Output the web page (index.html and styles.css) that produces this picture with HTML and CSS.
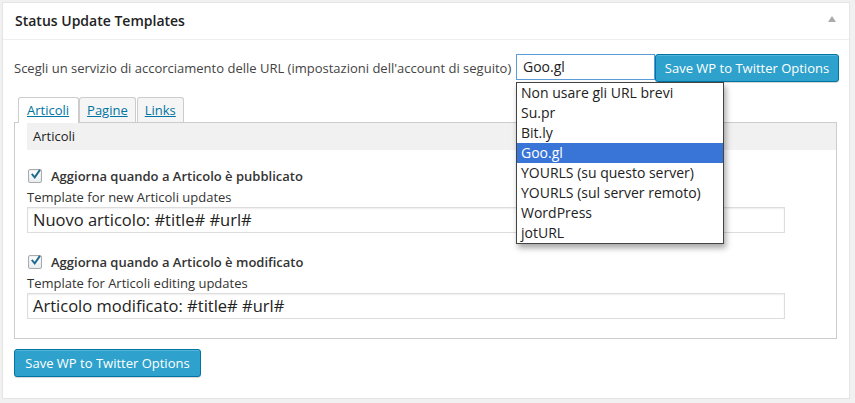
FILE: index.html
```html
<!DOCTYPE html>
<html>
<head>
<meta charset="utf-8">
<link rel="stylesheet" href="styles.css">
</head>
<body>
<div class="postbox">
  <div class="hndle">
    <h3 class="title">Status Update Templates</h3>
    <span class="toggle"></span>
  </div>
  <div class="inside">
    <div class="shortener-row">
      <span class="shortener-label">Scegli un servizio di accorciamento delle URL (impostazioni dell'account di seguito)</span>
      <div class="select-wrap">
        <div class="select">Goo.gl</div>
        <ul class="dropdown">
          <li>Non usare gli URL brevi</li>
          <li>Su.pr</li>
          <li>Bit.ly</li>
          <li class="selected">Goo.gl</li>
          <li>YOURLS (su questo server)</li>
          <li>YOURLS (sul server remoto)</li>
          <li>WordPress</li>
          <li>jotURL</li>
        </ul>
      </div>
      <button class="button-primary top-btn">Save WP to Twitter Options</button>
    </div>
    <div class="tabs">
      <a class="tab active">Articoli</a>
      <a class="tab">Pagine</a>
      <a class="tab">Links</a>
    </div>
    <div class="tab-panel">
      <div class="panel-heading">Articoli</div>
      <div class="fields">
        <div class="check-row">
          <span class="checkbox"><svg viewBox="0 0 14 14" width="14" height="14"><path d="M3 6.5 L6 10 L12 1.5" fill="none" stroke="#1e6a8e" stroke-width="2.4" stroke-linecap="square"/></svg></span>
          <span class="check-label">Aggiorna quando a Articolo è pubblicato</span>
        </div>
        <div class="field-label">Template for new Articoli updates</div>
        <div class="text-input">Nuovo articolo: #title# #url#</div>
        <div class="check-row second">
          <span class="checkbox"><svg viewBox="0 0 14 14" width="14" height="14"><path d="M3 6.5 L6 10 L12 1.5" fill="none" stroke="#1e6a8e" stroke-width="2.4" stroke-linecap="square"/></svg></span>
          <span class="check-label">Aggiorna quando a Articolo è modificato</span>
        </div>
        <div class="field-label">Template for Articoli editing updates</div>
        <div class="text-input">Articolo modificato: #title# #url#</div>
      </div>
    </div>
    <button class="button-primary bottom-btn">Save WP to Twitter Options</button>
  </div>
</div>
</body>
</html>
```

FILE: styles.css
```css
html, body {
  margin: 0;
  padding: 0;
  background: #f1f1f1;
}
body {
  padding: 2px 0 0 2px;
  font-family: "Open Sans", "Noto Sans", sans-serif;
  font-size: 13px;
  color: #444;
}
.postbox {
  width: 846px;
  height: 395px;
  background: #fff;
  border: 1px solid #e5e5e5;
  box-shadow: 0 1px 1px rgba(0,0,0,0.04);
}
.hndle {
  height: 36px;
  border-bottom: 1px solid #eee;
  display: flex;
  align-items: center;
  justify-content: space-between;
  padding: 0 13px 0 12px;
}
.title {
  margin: 0;
  font-size: 14px;
  font-weight: 600;
  color: #222;
  position: relative;
  top: -1px;
}
.toggle {
  width: 0;
  height: 0;
  border-left: 4px solid transparent;
  border-right: 4px solid transparent;
  border-bottom: 6px solid #aaa;
  position: relative;
  top: -2px;
}
.inside {
  padding: 14px 13px 0 11px;
}
.shortener-row {
  display: flex;
  align-items: flex-start;
  height: 28px;
}
.shortener-row > * {
  flex-shrink: 0;
  white-space: nowrap;
}
.shortener-label {
  line-height: 28px;
  width: 502px;
}
.select-wrap {
  position: relative;
}
.select {
  box-sizing: border-box;
  width: 139px;
  height: 26px;
  border: 1px dotted #333;
  outline: 1px solid #5b9dd9;
  outline-offset: -1px;
  font-size: 14px;
  line-height: 24px;
  padding-left: 6px;
  color: #222;
  background: #fff;
}
.dropdown {
  position: absolute;
  left: 0;
  top: 28px;
  margin: 0;
  padding: 0;
  list-style: none;
  width: 206px;
  background: #fff;
  border: 1px solid #444;
  box-shadow: 2px 4px 6px rgba(0,0,0,0.35);
  z-index: 5;
}
.dropdown li {
  height: 20px;
  line-height: 20px;
  font-size: 14px;
  padding-left: 4px;
  color: #222;
}
.dropdown li.selected {
  background: #3875d7;
  color: #fff;
}
.button-primary {
  box-sizing: border-box;
  font-family: "Open Sans", "Noto Sans", sans-serif;
  font-size: 13px;
  color: #fff;
  background: #2ea2cc;
  border: 1px solid #0074a2;
  border-radius: 3px;
  box-shadow: inset 0 1px 0 rgba(120,200,230,0.5), 0 1px 0 rgba(0,0,0,0.15);
  padding: 0;
  white-space: nowrap;
  cursor: pointer;
}
.top-btn {
  height: 28px;
  width: 184px;
  line-height: 26px;
}
.tabs {
  display: flex;
  margin-top: 15px;
  padding-left: 4px;
  position: relative;
  z-index: 1;
  margin-bottom: -1px;
}
.tab {
  box-sizing: border-box;
  height: 25px;
  line-height: 24px;
  padding: 0 7px;
  border: 1px solid #ccc;
  border-bottom: none;
  border-radius: 3px 3px 0 0;
  background: #f5f5f5;
  color: #0074a2;
  text-decoration: underline;
  font-size: 13px;
}
.tab.active {
  background: #fff;
  height: 26px;
  padding: 0 9px 0 8px;
}
.tab:nth-child(3) {
  margin-left: 1px;
}
.tab-panel {
  box-sizing: border-box;
  width: 823px;
  height: 217px;
  border: 1px solid #ccc;
  padding-left: 12px;
}
.panel-heading {
  height: 27px;
  line-height: 27px;
  background: #f1f1f1;
  padding-left: 6px;
  color: #222;
}
.fields {
  padding-top: 18px;
}
.check-row {
  display: flex;
  align-items: center;
  height: 16px;
  gap: 9px;
  padding-left: 1px;
}
.check-row.second {
  margin-top: 21px;
}
.checkbox {
  box-sizing: border-box;
  width: 14px;
  height: 14px;
  border: 1px solid #aaa;
  border-radius: 2px;
  background: linear-gradient(#fff, #e8eef2);
  display: flex;
  align-items: center;
  justify-content: center;
  box-shadow: inset 0 1px 2px rgba(0,0,0,0.08);
}
.checkbox svg {
  margin-top: -3px;
  margin-left: 1px;
}
.check-label {
  font-weight: 600;
  color: #333;
}
.field-label {
  margin-top: 4px;
  height: 18px;
  line-height: 18px;
  color: #333;
}
.text-input {
  box-sizing: border-box;
  margin-top: 1px;
  width: 758px;
  height: 26px;
  border: 1px solid #ddd;
  box-shadow: inset 0 1px 2px rgba(0,0,0,0.07);
  font-size: 16.5px;
  line-height: 24px;
  padding-left: 5px;
  color: #222;
}
.bottom-btn {
  margin-top: 10px;
  height: 28px;
  width: 187px;
  line-height: 26px;
}
```
